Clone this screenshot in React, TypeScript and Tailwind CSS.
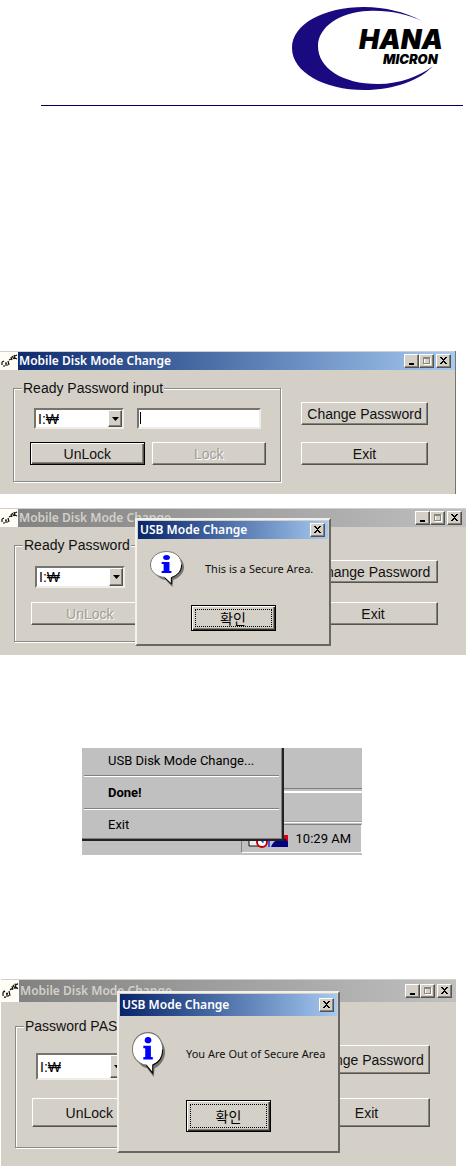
import type { ReactNode } from "react";
import clsx from "clsx";

const RAISED =
  "border border-t-white border-l-white border-r-[#55534f] border-b-[#55534f] shadow-[inset_-1px_-1px_0_#85827c]";

type Size = "short" | "medium" | "tall";

const SIZES: Record<
  Size,
  { bar: string; body: string; group: string; field: string; button: string; side: string }
> = {
  short: {
    bar: "h-[18px]",
    body: "pt-2 pb-3 pl-[13px]",
    group: "gap-[13px] pt-[10px] pb-4",
    field: "h-[21px]",
    button: "h-[23px]",
    side: "w-[127px] gap-[17px] pt-6 ml-5 mr-[27px]",
  },
  medium: {
    bar: "h-[18px]",
    body: "pt-2 pb-[13px] pl-[14px]",
    group: "gap-[14px] pt-[11px] pb-4",
    field: "h-[22px]",
    button: "h-[23px]",
    side: "w-[130px] gap-[19px] pt-[25px] ml-5 mr-7",
  },
  tall: {
    bar: "h-[22px]",
    body: "pt-[14px] pb-[18px] pl-[14px]",
    group: "gap-[18px] pt-[17px] pb-5",
    field: "h-[27px]",
    button: "h-[29px]",
    side: "w-[127px] gap-6 pt-[29px] ml-5 mr-[26px]",
  },
};

function Logo() {
  return (
    <svg viewBox="288 4 160 90" className="h-[90px] w-[160px]" role="img" aria-label="Hana Micron">
      <path
        fill="#1a0a80"
        d="M422 21C405 12 385 7 364 7C324 7 292 24 292 48C292 72 324 90 364 90C395 90 420 80 433 66C420 76 400 84 378 84C342 84 318 68 318 46C318 27 340 12 368 11C388 10 407 14 422 21Z"
      />
      <text x="359" y="49" fontFamily="Inter, sans-serif" fontSize="27" fontWeight="900" fontStyle="italic">
        HANA
      </text>
      <text x="383" y="64" fontFamily="Inter, sans-serif" fontSize="13" fontWeight="900" fontStyle="italic">
        MICRON
      </text>
    </svg>
  );
}

function AppIcon() {
  return (
    <svg viewBox="0 0 18 18" className="h-full w-[18px] shrink-0 bg-[#fffdf4]" preserveAspectRatio="none" aria-hidden="true">
      <path
        d="M2 10l2-1M2 10v3M3 14h2M5 11h2M6 11v3M7 13h1M8 9l1 4M9 8l2-1M11 5l1 3M12 4l2 3M14 3l1 4M15 4l2-1M15 6l2 1"
        fill="none"
        stroke="#111"
        strokeWidth="1.2"
      />
    </svg>
  );
}

function CaptionButton({ kind }: { kind: "minimize" | "maximize" | "close" }) {
  return (
    <button
      type="button"
      aria-label={kind}
      className={clsx(
        "flex h-[14px] w-[15px] items-center justify-center bg-[#d4d0c8]",
        RAISED,
        kind === "close" && "ml-[2px]"
      )}
    >
      <svg viewBox="0 0 10 10" className="h-[10px] w-[10px]" shapeRendering="crispEdges" aria-hidden="true">
        {kind === "minimize" && <path d="M2 7h5v2H2z" fill="#000" />}
        {kind === "maximize" && (
          <>
            <path d="M2.5 2.5h6v6h-6z" fill="none" stroke="#fff" />
            <path d="M1.5 1.5h6v6h-6zM1 2.5h7" fill="none" stroke="#8a867e" />
          </>
        )}
        {kind === "close" && (
          <path d="M1 1h2v1h1v1h1V2h1V1h2v1H7v1H6v1H5v1h1v1h1v1h1v1H6V7H5V6H4v1H3v1H1V7h1V6h1V5h1V4H3V3H2V2H1z" fill="#000" />
        )}
      </svg>
    </button>
  );
}

function PushButton({
  children,
  className,
  disabled,
  isDefault,
}: {
  children: ReactNode;
  className?: string;
  disabled?: boolean;
  isDefault?: boolean;
}) {
  return (
    <button
      type="button"
      disabled={disabled}
      className={clsx(
        "flex items-center justify-center bg-[#d4d0c8] text-sm whitespace-nowrap",
        isDefault
          ? "border border-black shadow-[inset_1px_1px_0_#fff,inset_-1px_-1px_0_#55534f,inset_-2px_-2px_0_#85827c]"
          : RAISED,
        disabled ? "text-[#a19d96] [text-shadow:1px_1px_0_#fff]" : "text-[#111]",
        className
      )}
    >
      {children}
    </button>
  );
}

function DriveSelect({ id, className }: { id: string; className: string }) {
  return (
    <div
      className={clsx(
        "relative w-[90px] shrink-0 border-2 border-t-[#77746f] border-l-[#77746f] border-r-[#efede8] border-b-[#efede8] bg-white",
        className
      )}
    >
      <select
        id={id}
        aria-label="Drive"
        className="block h-full w-full appearance-none bg-transparent pl-[2px] font-['Liberation_Sans','Noto_Sans_CJK_KR',sans-serif] text-sm leading-4 outline-none"
      >
        <option>I:₩</option>
      </select>
      <span
        className={clsx(
          "pointer-events-none absolute inset-y-0 right-0 flex w-[14px] items-center justify-center bg-[#d4d0c8]",
          RAISED
        )}
      >
        <svg viewBox="0 0 7 4" className="h-1 w-[7px]" aria-hidden="true">
          <path d="M0 0h7L3.500 4z" />
        </svg>
      </span>
    </div>
  );
}

interface DiskWindowProps {
  id: string;
  size: Size;
  legend: string;
  active?: boolean;
  unlockDisabled?: boolean;
  className?: string;
  children?: ReactNode;
}

function DiskWindow({ id, size, legend, active, unlockDisabled, className, children }: DiskWindowProps) {
  const s = SIZES[size];
  return (
    <section className={clsx("relative bg-[#d4d0c8] pt-px", className)}>
      <header
        className={clsx(
          "flex items-center bg-linear-to-r pr-1",
          s.bar,
          active ? "from-[#0a246a] to-[#a6caf0]" : "from-[#808080] to-[#c0c0c0]"
        )}
      >
        <AppIcon />
        <h2
          className={clsx(
            "flex-1 pl-px font-['Noto_Sans',sans-serif] text-xs font-semibold whitespace-nowrap",
            active ? "text-white" : "text-[#d4d0c8]"
          )}
        >
          Mobile Disk Mode Change
        </h2>
        <CaptionButton kind="minimize" />
        <CaptionButton kind="maximize" />
        <CaptionButton kind="close" />
      </header>
      <div className={clsx("flex items-start", s.body)}>
        <fieldset className="min-w-0 flex-1 border border-[#8c8a86] pr-[14px] pl-4 shadow-[1px_1px_0_#fff,inset_1px_1px_0_#fff]">
          <legend className="-ml-2 bg-[#d4d0c8] px-px text-sm leading-5 whitespace-nowrap text-[#111]">{legend}</legend>
          <div className={clsx("flex flex-col", s.group)}>
            <div className="flex gap-[13px] pr-[5px] pl-1">
              <DriveSelect id={`${id}-drive`} className={s.field} />
              <div className={clsx("relative flex-1", s.field)}>
                <input
                  type="password"
                  aria-label="Password"
                  className="block h-full w-full border-2 border-t-[#77746f] border-l-[#77746f] border-r-[#efede8] border-b-[#efede8] bg-white px-1 text-sm caret-transparent outline-none"
                />
                {active && <span className="absolute top-1 left-[3px] h-3 w-px bg-black" />}
              </div>
            </div>
            <div className="grid grid-cols-2 gap-[7px]">
              <PushButton className={s.button} disabled={unlockDisabled} isDefault={active}>
                UnLock
              </PushButton>
              {active && (
                <PushButton className={s.button} disabled>
                  Lock
                </PushButton>
              )}
            </div>
          </div>
        </fieldset>
        <div className={clsx("flex shrink-0 flex-col", s.side)}>
          <PushButton className={s.button}>Change Password</PushButton>
          <PushButton className={s.button}>Exit</PushButton>
        </div>
      </div>
      {children}
    </section>
  );
}

function InfoBubble({ className }: { className: string }) {
  return (
    <svg viewBox="0 0 36 36" preserveAspectRatio="none" className={clsx("shrink-0", className)} aria-hidden="true">
      <path d="M19 3c9 0 16 6 16 13 0 6-5 11-11 13l-1 7-7-7C9 28 4 23 4 16 4 9 10 3 19 3z" fill="#77746f" />
      <path
        d="M17 .500C26 .500 32.500 6 32.500 14c0 6-4 10.500-10.500 12.500V33l-7-6.500C6 25.500.500 20 .500 14 .500 6 8 .500 17 .500z"
        fill="#fff"
        stroke="#77746f"
      />
      <path d="M32.500 14c0 6-4 10.500-10.500 12.500V33l-7-6.500" fill="none" stroke="#000" />
      <ellipse cx="17" cy="6.500" rx="3.500" ry="2.500" fill="#00f" />
      <path d="M12 11h8v9h2v2H12v-2h2v-7h-2z" fill="#00f" />
    </svg>
  );
}

function MessageBox({ message, tall, className }: { message: string; tall?: boolean; className: string }) {
  return (
    <div
      role="dialog"
      aria-label="USB Mode Change"
      className={clsx(
        "absolute border-2 border-t-[#f3f1ed] border-l-[#f3f1ed] border-r-[#696763] border-b-[#696763] bg-[#d4d0c8] p-px",
        className
      )}
    >
      <div
        className={clsx(
          "flex items-center bg-linear-to-r from-[#0a246a] to-[#a6caf0] pr-[3px] pl-[2px]",
          tall ? "h-[22px]" : "h-[18px]"
        )}
      >
        <h3 className="flex-1 font-['Noto_Sans',sans-serif] text-xs font-semibold whitespace-nowrap text-white">
          USB Mode Change
        </h3>
        <CaptionButton kind="close" />
      </div>
      <div className={clsx("flex items-center gap-5 pl-3", tall ? "pt-4" : "pt-3")}>
        <InfoBubble className={tall ? "h-[45px] w-[34px]" : "h-9 w-[35px]"} />
        <p className="font-['Noto_Sans',sans-serif] text-[11px] whitespace-nowrap text-[#111]">{message}</p>
      </div>
      <button
        type="button"
        className={clsx(
          "mx-auto block w-[85px] border border-black bg-[#d4d0c8] p-[3px] font-['Noto_Sans_CJK_KR',sans-serif] text-sm shadow-[inset_1px_1px_0_#fff,inset_-1px_-1px_0_#33312f,inset_-2px_-2px_0_#85827c]",
          tall ? "mt-[23px] h-8" : "mt-[18px] h-[26px]"
        )}
      >
        <span className="flex h-full items-center justify-center border border-dotted border-black leading-4">확인</span>
      </button>
    </div>
  );
}

function TrayMenu() {
  return (
    <section className="relative mt-[93px] mr-[104px] ml-[82px] flex h-[107px] flex-col bg-[#c0c0c0]">
      <div className="h-[41px] border-b border-[#808080]" />
      <div className="mt-[2px] h-[31px] border-t-2 border-b border-t-white border-b-[#a0a0a0]" />
      <div className="flex flex-1 justify-end border-t border-white pt-px pb-[2px]">
        <div className="flex w-[121px] items-center border border-t-[#808080] border-l-[#808080] border-r-white border-b-white">
          <svg viewBox="0 0 48 24" className="h-6 w-12 shrink-0" aria-hidden="true">
            <path d="M7 4h12v15H7z" fill="#eee" stroke="#111" />
            <circle cx="20" cy="15" r="5" fill="#fff" stroke="#c00000" strokeWidth="2" />
            <path d="M20 12v3h2" fill="none" stroke="#00f" />
            <path d="M27 8v12" stroke="#4050ff" strokeWidth="2" />
            <path d="M29 20c2-6 7-9 17-10v10z" fill="#000080" />
            <path d="M42 8h4v7l-2-3h-2z" fill="#e00000" />
          </svg>
          <time className="ml-auto pr-[10px] font-['Roboto',sans-serif] text-[13px] whitespace-nowrap">10:29 AM</time>
        </div>
      </div>
      <menu className="absolute top-0 left-0 flex h-[93px] w-[202px] flex-col border-r-2 border-b-2 border-[#222] bg-[#c0c0c0] pr-[3px] pl-[2px] font-['Roboto',sans-serif] text-[13px] shadow-[inset_-1px_-1px_0_#808080]">
        <li className="flex h-7 border-b border-[#808080]">
          <button type="button" className="w-full pb-[2px] pl-6 text-left whitespace-nowrap">
            USB Disk Mode Change...
          </button>
        </li>
        <li className="flex h-[33px] border-t border-b border-t-white border-b-[#808080]">
          <button type="button" className="w-full pl-6 text-left font-bold">
            Done!
          </button>
        </li>
        <li className="flex flex-1 border-t border-white">
          <button type="button" className="w-full pl-6 text-left">
            Exit
          </button>
        </li>
      </menu>
    </section>
  );
}

export default function App() {
  return (
    <main className="min-h-screen overflow-x-hidden bg-white font-['Liberation_Sans',Arial,sans-serif] text-black">
      <header className="mr-[3px] ml-[41px] flex h-[106px] items-start justify-end border-b border-[#000060] pt-1 pr-[15px]">
        <Logo />
      </header>

      <DiskWindow
        id="ready"
        size="short"
        legend="Ready Password input"
        active
        className="mt-[245px] mr-[10px] border-r border-[#77746f]"
      />

      <DiskWindow id="locked" size="medium" legend="Ready Password" unlockDisabled className="mt-[14px]">
        <MessageBox message="This is a Secure Area." className="top-[10px] left-[135px] h-[128px] w-[196px]" />
      </DiskWindow>

      <TrayMenu />

      <DiskWindow id="passed" size="tall" legend="Password PASS" className="mt-[124px] mr-[10px] ml-px">
        <MessageBox
          message="You Are Out of Secure Area"
          tall
          className="top-[12px] left-[116px] h-[162px] w-[223px]"
        />
      </DiskWindow>
    </main>
  );
}
